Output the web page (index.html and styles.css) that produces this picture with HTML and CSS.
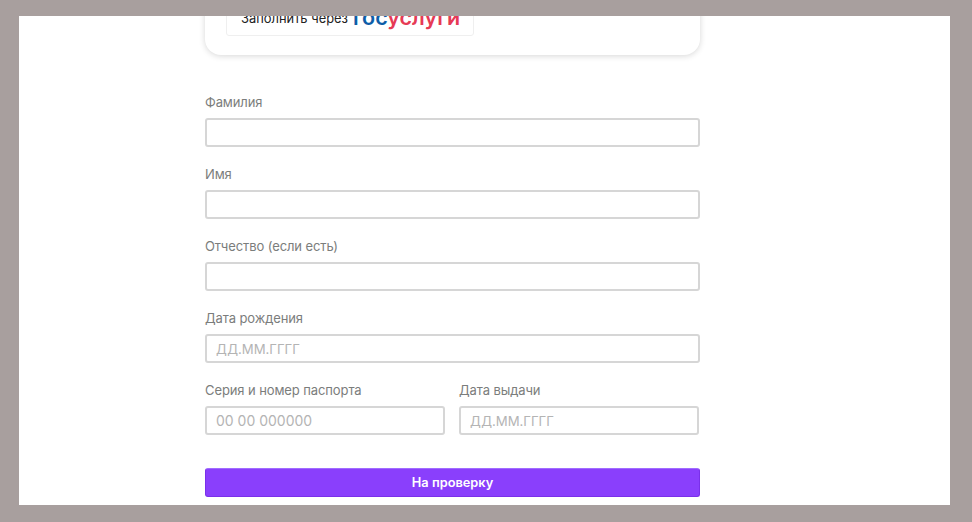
FILE: index.html
```html
<!DOCTYPE html>
<html lang="ru">
<head>
<meta charset="utf-8">
<title>Форма</title>
<link rel="stylesheet" href="styles.css">
</head>
<body>
<main class="panel">
  <div class="column">
    <section class="card">
      <button class="gos-button" type="button">
        <span class="gos-text">Заполнить через</span>
        <span class="gos-logo"><span class="gos-blue">гос</span><span class="gos-red">услуги</span></span>
      </button>
    </section>
    <form class="form">
      <label class="field"><span class="label">Фамилия</span><input class="input" type="text"></label>
      <label class="field"><span class="label">Имя</span><input class="input" type="text"></label>
      <label class="field"><span class="label">Отчество (если есть)</span><input class="input" type="text"></label>
      <label class="field"><span class="label">Дата рождения</span><input class="input input-date" type="text" placeholder="ДД.ММ.ГГГГ"></label>
      <div class="row">
        <label class="field"><span class="label">Серия и номер паспорта</span><input class="input" type="text" placeholder="00 00 000000"></label>
        <label class="field"><span class="label">Дата выдачи</span><input class="input input-date" type="text" placeholder="ДД.ММ.ГГГГ"></label>
      </div>
      <button class="submit" type="button">На проверку</button>
    </form>
  </div>
</main>
</body>
</html>
```
FILE: styles.css
```css
* { box-sizing: border-box; }
html, body { height: 100%; }
body {
  margin: 0;
  padding: 16px 22px 17px 19px;
  background: #a89f9e;
  font-family: Inter, "Liberation Sans", sans-serif;
  overflow: hidden;
}
.panel {
  height: 489px;
  background: #fff;
  overflow: hidden;
  padding-left: 186px;
}
.column { width: 495px; }
.card {
  height: 100px;
  margin-top: -61px;
  padding: 47px 0 0 21px;
  margin-bottom: 39px;
  background: #fff;
  border-radius: 16px;
  box-shadow: 0 1px 6px rgba(0, 0, 0, 0.16);
}
.gos-button {
  display: flex;
  align-items: center;
  gap: 5px;
  width: 248px;
  height: 34px;
  margin: 0;
  padding: 0 0 0 14px;
  background: #fff;
  border: 1px solid #efefef;
  border-radius: 3px;
  font-family: inherit;
  overflow: hidden;
  white-space: nowrap;
}
.gos-text { font-size: 12.9px; color: #222; line-height: 14px; }
.gos-logo { font-size: 21.5px; font-weight: 600; line-height: 14px; position: relative; top: -2px; }
.gos-blue { color: #0d5ea8; }
.gos-red { color: #e63a55; }
.form { display: flex; flex-direction: column; gap: 19px; }
.field { display: flex; flex-direction: column; gap: 7px; }
.label { font-size: 13px; line-height: 17px; letter-spacing: -0.1px; color: #7b7d7c; height: 17px; white-space: nowrap; }
.input {
  width: 100%;
  height: 29px;
  padding: 0 9px;
  background: #fff;
  border: 2px solid #d6d6d6;
  border-radius: 3px;
  font-family: inherit;
  font-size: 14px;
  outline: none;
}
.input-date { font-size: 13.2px; }
.input::placeholder { color: #b4b4b4; opacity: 1; }
.row { display: grid; grid-template-columns: 240px 240px; column-gap: 14px; }
.submit {
  width: 100%;
  height: 29px;
  margin-top: 14px;
  background: #8a3ffc;
  border: 1px solid #7a30ea;
  border-top-color: #a06cff;
  border-radius: 3px;
  color: #fff;
  font-family: inherit;
  font-size: 12.8px;
  font-weight: 600;
}
```
